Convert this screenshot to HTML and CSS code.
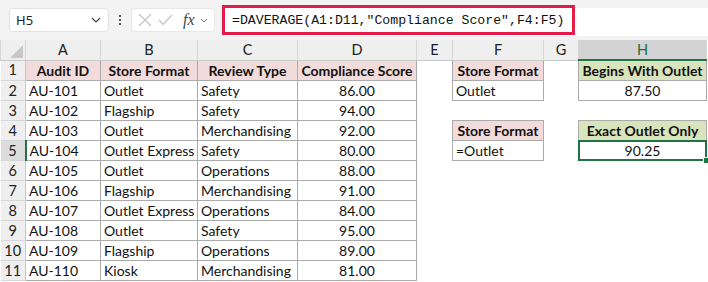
FILE: index.html
```html
<!DOCTYPE html>
<html>
<head>
<meta charset="utf-8">
<link rel="stylesheet" href="styles.css">
</head>
<body>
<div class="topbar">
  <div class="namebox">
    <span class="name">H5</span>
    <svg class="chev" width="10" height="6" viewBox="0 0 10 6"><path d="M1 1 L5 5 L9 1" fill="none" stroke="#444" stroke-width="1.2"/></svg>
  </div>
  <div class="dots"><span></span><span></span><span></span></div>
  <div class="fxbox">
    <svg class="ic-x" width="14" height="14" viewBox="0 0 14 14"><path d="M1 1 L13 13 M13 1 L1 13" stroke="#c4c4c4" stroke-width="1.2" fill="none"/></svg>
    <svg class="ic-ok" width="15" height="12" viewBox="0 0 15 12"><path d="M1 6 L5 10.5 L14 1" stroke="#c4c4c4" stroke-width="1.2" fill="none"/></svg>
    <span class="fx">fx</span>
    <svg class="ic-dd" width="8" height="5" viewBox="0 0 8 5"><path d="M1 1 L4 4 L7 1" fill="none" stroke="#777" stroke-width="1"/></svg>
  </div>
  <div class="formula">
    <span class="ftext">=DAVERAGE(A1:D11,"Compliance Score",F4:F5)</span>
  </div>
</div>
<table class="sheet">
  <colgroup>
    <col class="w-rh"><col class="w-a"><col class="w-b"><col class="w-c"><col class="w-d"><col class="w-e"><col class="w-f"><col class="w-g"><col class="w-h">
  </colgroup>
  <thead>
    <tr class="hdr">
      <th class="corner"><svg width="13" height="13" viewBox="0 0 13 13"><path d="M13 0 L13 13 L0 13 Z" fill="#c6c6c6"/></svg></th>
      <th>A</th><th>B</th><th>C</th><th>D</th><th>E</th><th>F</th><th>G</th><th class="hsel">H</th>
    </tr>
  </thead>
  <tbody>
    <tr><th class="rh">1</th><td class="b pink hd">Audit ID</td><td class="b pink hd">Store Format</td><td class="b pink hd">Review Type</td><td class="b pink hd">Compliance Score</td><td></td><td class="b pink hd">Store Format</td><td></td><td class="b green hd">Begins With Outlet</td></tr>
    <tr><th class="rh">2</th><td class="b">AU-101</td><td class="b">Outlet</td><td class="b">Safety</td><td class="b num">86.00</td><td></td><td class="b">Outlet</td><td></td><td class="b num">87.50</td></tr>
    <tr><th class="rh">3</th><td class="b">AU-102</td><td class="b">Flagship</td><td class="b">Safety</td><td class="b num">94.00</td><td></td><td></td><td></td><td></td></tr>
    <tr><th class="rh">4</th><td class="b">AU-103</td><td class="b">Outlet</td><td class="b">Merchandising</td><td class="b num">92.00</td><td></td><td class="b pink hd">Store Format</td><td></td><td class="b green hd">Exact Outlet Only</td></tr>
    <tr><th class="rh rsel">5</th><td class="b">AU-104</td><td class="b">Outlet Express</td><td class="b">Safety</td><td class="b num">80.00</td><td></td><td class="b">=Outlet</td><td></td><td class="b num sel">90.25</td></tr>
    <tr><th class="rh">6</th><td class="b">AU-105</td><td class="b">Outlet</td><td class="b">Operations</td><td class="b num">88.00</td><td></td><td></td><td></td><td></td></tr>
    <tr><th class="rh">7</th><td class="b">AU-106</td><td class="b">Flagship</td><td class="b">Merchandising</td><td class="b num">91.00</td><td></td><td></td><td></td><td></td></tr>
    <tr><th class="rh">8</th><td class="b">AU-107</td><td class="b">Outlet Express</td><td class="b">Operations</td><td class="b num">84.00</td><td></td><td></td><td></td><td></td></tr>
    <tr><th class="rh">9</th><td class="b">AU-108</td><td class="b">Outlet</td><td class="b">Safety</td><td class="b num">95.00</td><td></td><td></td><td></td><td></td></tr>
    <tr><th class="rh">10</th><td class="b">AU-109</td><td class="b">Flagship</td><td class="b">Operations</td><td class="b num">89.00</td><td></td><td></td><td></td><td></td></tr>
    <tr><th class="rh">11</th><td class="b">AU-110</td><td class="b">Kiosk</td><td class="b">Merchandising</td><td class="b num">81.00</td><td></td><td></td><td></td><td></td></tr>
  </tbody>
</table>
</body>
</html>
```
FILE: styles.css
```css
html, body {
  margin: 0;
  padding: 0;
  background: #ffffff;
}
body {
  width: 708px;
  height: 282px;
  overflow: hidden;
  font-family: Lato, "Liberation Sans", sans-serif;
}
.topbar {
  height: 40px;
  background: #f3f3f3;
  display: flex;
  align-items: center;
  box-sizing: border-box;
}
.namebox {
  margin-left: 9px;
  width: 100px;
  height: 24px;
  box-sizing: border-box;
  background: #fff;
  border: 1px solid #e2e2e2;
  border-radius: 4px;
  display: flex;
  align-items: center;
  justify-content: space-between;
  padding: 0 7px 0 6px;
  font-family: "Noto Sans", sans-serif;
  font-size: 13px;
  color: #222;
}
.dots {
  width: 22px;
  display: flex;
  flex-direction: column;
  align-items: center;
  gap: 2px;
}
.dots span {
  width: 2px;
  height: 2px;
  background: #555;
}
.fxbox {
  width: 84px;
  height: 24px;
  box-sizing: border-box;
  background: #fff;
  border: 1px solid #e8e8e8;
  border-radius: 4px;
  display: flex;
  align-items: center;
  padding-left: 6px;
}
.ic-ok { margin-left: 6px; }
.fx {
  font-family: "Liberation Serif", serif;
  font-style: italic;
  font-size: 16px;
  color: #444;
  margin-left: 10px;
  margin-right: 5px;
}
.formula {
  flex: 1;
  align-self: stretch;
  margin: 8px 0 4px 7px;
  background: #fff;
  display: flex;
  align-items: center;
}
.ftext {
  box-sizing: border-box;
  height: 30px;
  width: 353px;
  margin-top: -4px;
  border: 3px solid #e31c4c;
  padding-left: 7px;
  display: flex;
  align-items: center;
  font-family: "Liberation Mono", monospace;
  font-size: 13.2px;
  color: #111;
  white-space: nowrap;
}
.sheet {
  border-collapse: collapse;
  table-layout: fixed;
  width: 706px;
  font-size: 14px;
  color: #111;
}
.w-rh { width: 25px; }
.w-a { width: 75px; }
.w-b { width: 97px; }
.w-c { width: 100px; }
.w-d { width: 119px; }
.w-e { width: 36px; }
.w-f { width: 91px; }
.w-g { width: 35px; }
.w-h { width: 128px; }
.sheet tr { height: 20px; }
.sheet th, .sheet td {
  padding: 1px 0 0 3px;
  height: 20px;
  box-sizing: border-box;
  white-space: nowrap;
  overflow: visible;
  line-height: 18px;
}
.hdr th {
  background: #efefef;
  border-left: 1px solid #d6d6d6;
  border-right: 1px solid #d6d6d6;
  border-bottom: 1px solid #c8c8c8;
  font-weight: normal;
  font-size: 14.5px;
  text-align: center;
  padding: 0;
  color: #222;
}
.hdr th.corner {
  text-align: right;
  vertical-align: bottom;
  padding: 0 2px 2px 0;
  line-height: 0;
}
.hdr th.hsel {
  background: #d3d3d3;
  color: #1d6b3f;
  border-bottom: 2px solid #217346;
}
.rh {
  background: #efefef;
  border-right: 1px solid #c8c8c8;
  border-bottom: 1px solid #d6d6d6;
  font-weight: normal;
  font-size: 14.5px;
  text-align: center;
  padding: 0 !important;
  color: #222;
}
.rh.rsel {
  background: #dcdcdc;
  border-right: 2px solid #217346;
}
td.b {
  border: 1px solid #ababab;
}
td.pink { background: #f2dcdb; }
td.green { background: #d8e4bc; }
td.hd {
  font-weight: bold;
  text-align: center;
  padding-left: 0;
}
td.num {
  text-align: center;
  padding-left: 0;
}
td.sel {
  position: relative;
}
td.sel::after {
  content: "";
  position: absolute;
  left: -1px;
  top: -1px;
  right: -1px;
  bottom: -1px;
  border: 2px solid #217346;
}
td.sel::before {
  content: "";
  position: absolute;
  right: -4px;
  bottom: -4px;
  width: 5px;
  height: 5px;
  background: #217346;
  border: 1px solid #fff;
  z-index: 2;
}
```
